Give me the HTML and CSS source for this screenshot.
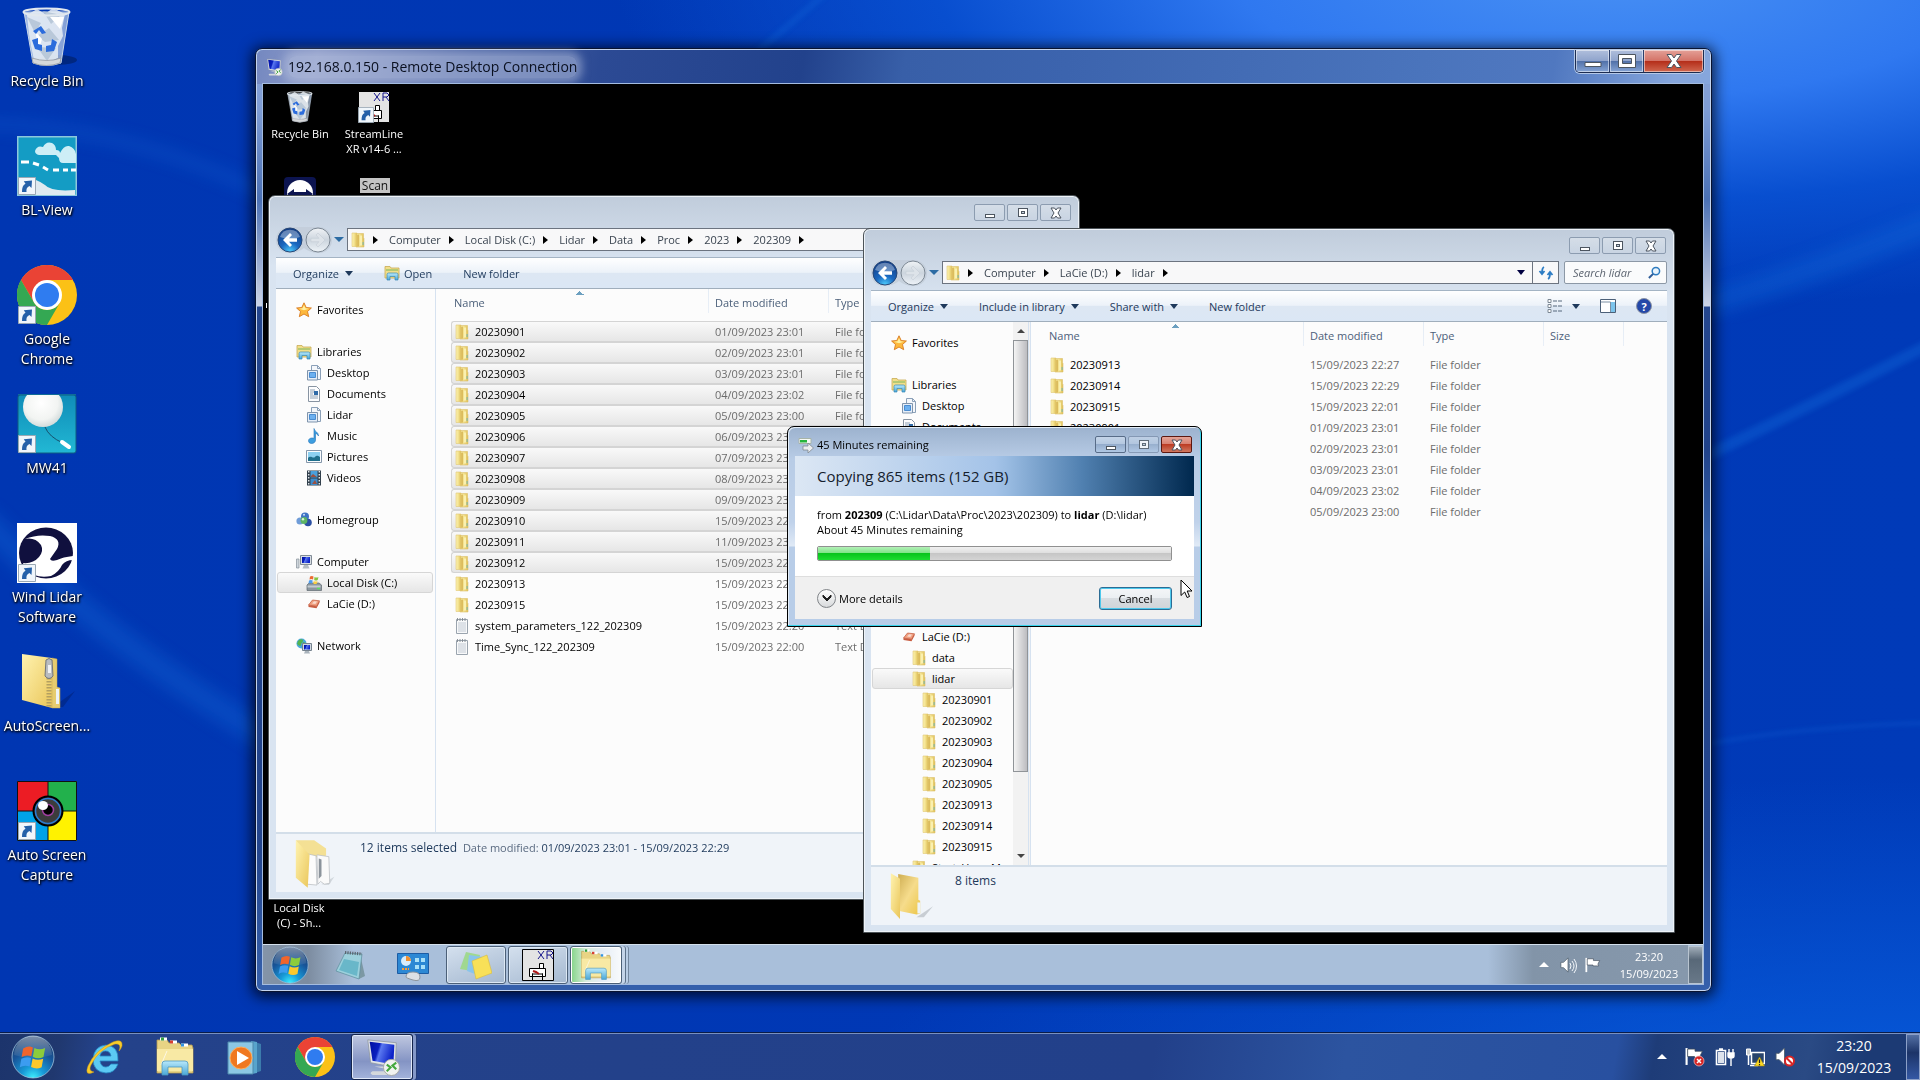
FILE: index.html
```html
<!DOCTYPE html>
<html lang="en">
<head>
<meta charset="utf-8">
<title>Desktop</title>
<link rel="stylesheet" href="styles.css">
</head>
<body>
<svg class="defs" aria-hidden="true">
  <defs>
    <linearGradient id="gFold" x1="0" x2="1"><stop offset="0" stop-color="#fdf4b4"/><stop offset=".5" stop-color="#f2e08c"/><stop offset="1" stop-color="#dfbf58"/></linearGradient>
    <linearGradient id="gBig" x1="0" x2="1" y2="1"><stop offset="0" stop-color="#fff3b0"/><stop offset="1" stop-color="#eac65a"/></linearGradient>
    <linearGradient id="gBig2" x1="0" x2="1" y2="1"><stop offset="0" stop-color="#cfae52"/><stop offset=".5" stop-color="#f6dc8c"/><stop offset="1" stop-color="#ecc648"/></linearGradient>
    <radialGradient id="gOrb" cx=".5" cy="1" r=".9"><stop offset="0" stop-color="#3ff0ff"/><stop offset=".3" stop-color="#189bd8"/><stop offset=".7" stop-color="#17559a"/><stop offset="1" stop-color="#1c3f70"/></radialGradient>
    <linearGradient id="gGloss" x1="0" x2="0" y2="1"><stop offset="0" stop-color="#fff" stop-opacity=".85"/><stop offset="1" stop-color="#fff" stop-opacity=".1"/></linearGradient>
    <radialGradient id="gBack" cx=".5" cy="1" r="1"><stop offset="0" stop-color="#4fd0ff"/><stop offset=".4" stop-color="#1a68c0"/><stop offset="1" stop-color="#123a80"/></radialGradient>
    <linearGradient id="gFwd" x1="0" x2="0" y2="1"><stop offset="0" stop-color="#f0f3f6"/><stop offset=".5" stop-color="#ccd5de"/><stop offset="1" stop-color="#eef3f8"/></linearGradient>
    <linearGradient id="gScr" x1="0" x2="1" y2=".3"><stop offset="0" stop-color="#0010a0"/><stop offset=".4" stop-color="#0a20c0"/><stop offset=".5" stop-color="#5a78f0"/><stop offset="1" stop-color="#0c22c8"/></linearGradient>
    <linearGradient id="gTeal" x1="0" x2="0" y2="1"><stop offset="0" stop-color="#0f8cb8"/><stop offset="1" stop-color="#22b8d4"/></linearGradient>
    <radialGradient id="gBall" cx=".45" cy=".4" r=".6"><stop offset="0" stop-color="#fff"/><stop offset=".7" stop-color="#f2f4f2"/><stop offset="1" stop-color="#d4dcdc"/></radialGradient>
    <linearGradient id="gBin" x1="0" x2="1"><stop offset="0" stop-color="#d4e4f4" stop-opacity=".75"/><stop offset=".5" stop-color="#f4f8fc" stop-opacity=".6"/><stop offset="1" stop-color="#a8c0e0" stop-opacity=".75"/></linearGradient>
    <linearGradient id="gLib" x1="0" x2="0" y2="1"><stop offset="0" stop-color="#b8e8fa"/><stop offset="1" stop-color="#4aa8d8"/></linearGradient>
    <filter id="soft" x="-20%" y="-20%" width="140%" height="140%"><feGaussianBlur stdDeviation="9"/></filter>
    <filter id="soft2" x="-20%" y="-20%" width="140%" height="140%"><feGaussianBlur stdDeviation="3"/></filter>
  </defs>

  <symbol id="folder" viewBox="0 0 14 16">
    <path d="M5 1.500h7.500V6l.5.500V15H5z" fill="url(#gFold)" stroke="#dcc06a" stroke-width=".6"/>
    <path d="M5 3l3-.5v12L5 15z" fill="#dcbc5c"/>
    <path d="M1 1h5v13.500H1z" fill="url(#gFold)" stroke="#e0c874" stroke-width=".6"/>
    <path d="M9 3.500h2v10H9z" fill="#faf0b0"/>
    <path d="M11.600 10h1v3h-1z" fill="#74b8b0"/>
  </symbol>
  <symbol id="textfile" viewBox="0 0 14 16">
    <path d="M1.500 1.500h11v14h-11z" fill="#f8f9fa" stroke="#9aa4ae"/>
    <path d="M3 5h8M3 7h8M3 9h8M3 11h8M3 13h8" stroke="#b4bfca" stroke-width=".8"/>
    <path d="M2.500 0v3M5 0v3M7.500 0v3M10 0v3" stroke="#808890" stroke-width=".9"/>
  </symbol>
  <symbol id="star" viewBox="0 0 16 16">
    <path d="M8 .8l2.200 4.700 5.200.5-3.900 3.500 1.200 5.200L8 12l-4.700 2.700 1.200-5.200L.6 6l5.200-.5z" fill="#fdb83c" stroke="#d87a20" stroke-width=".9"/>
    <path d="M8 3l1.500 3.300 3.500.4-5 1.500-5-1.500 3.500-.4z" fill="#fff0a0"/>
  </symbol>
  <symbol id="library" viewBox="0 0 16 16">
    <path d="M1 1.500h5l1 1.500h8v10H1z" fill="#f2df8a" stroke="#c8ab54" stroke-width=".8"/>
    <path d="M2 5h12" stroke="#79b45c"/>
    <path d="M3 15v-5.500q0-1.500 1.500-1.500h8q1.500 0 1.500 1.500V15h-3v-3.500H6V15z" fill="url(#gLib)" stroke="#3787b4" stroke-width=".7"/>
  </symbol>
  <symbol id="libdoc" viewBox="0 0 16 16">
    <path d="M5.500.5h6l3 3v11h-9z" fill="#f4f7fb" stroke="#8ba0b8"/>
    <path d="M11.500.5v3h3" fill="none" stroke="#8ba0b8"/>
    <path d="M1.500 5.500h10v9.500h-10z" fill="#e6eef8" stroke="#7f94ac"/>
    <path d="M3.500 7.500h6v5h-6z" fill="#6cb0f0" stroke="#4a8cd0"/>
  </symbol>
  <symbol id="docs" viewBox="0 0 16 16">
    <path d="M2.500.5h8l3 3v12h-11z" fill="#fdfdfe" stroke="#8894a2"/>
    <path d="M4 4h5M4 6h4M4 8h3M4 10h8M4 12h8" stroke="#8ea0b4"/>
    <path d="M8 5h4v4H8z" fill="#2f6aa8"/>
  </symbol>
  <symbol id="music" viewBox="0 0 16 16">
    <path d="M8 .5c.4 3 4.600 3.500 4.500 7.500-.8-1.700-2-2.400-3-2.600V12c0 2-1.700 3.500-3.900 3.500S2.500 14.300 2.500 12.700 4.200 9.800 6.500 10c.5 0 .9.200 1.500.4z" fill="#3c9ee0" stroke="#2272b8" stroke-width=".6"/>
  </symbol>
  <symbol id="pics" viewBox="0 0 16 16">
    <path d="M.5 1.500h15v12H.5z" fill="#fafcfe" stroke="#8496aa"/>
    <path d="M2 3h12v9H2z" fill="#8cd0f0"/><path d="M2 9c3-3 5 1 7-1s3-1 5 0v4H2z" fill="#1f6f8c"/>
  </symbol>
  <symbol id="video" viewBox="0 0 16 16">
    <path d="M1 .5h14v15H1z" fill="#32404c"/>
    <path d="M4.500 1h7v6.500h-7z" fill="#4aa0dc"/><path d="M4.500 8.500h7V15h-7z" fill="#3d8ccc"/>
    <path d="M5 6l2-2 4 3H5zM6 14l3-4 2 4z" fill="#9c5040"/>
    <path d="M2.700 1v14M13.300 1v14" stroke="#dfe6ec" stroke-width="1.400" stroke-dasharray="1.500 1.500"/>
  </symbol>
  <symbol id="homegroup" viewBox="0 0 16 16">
    <circle cx="9" cy="4.500" r="4" fill="#3f74c4"/><circle cx="4" cy="9" r="3.600" fill="#6f9cd8"/><circle cx="12" cy="10.500" r="3.800" fill="#2c50a4"/>
    <circle cx="8" cy="8.500" r="3.400" fill="#5cb464"/><circle cx="7" cy="7.300" r="1.200" fill="#d8f4d8"/><circle cx="8" cy="2.800" r="1" fill="#cfe0fa"/>
  </symbol>
  <symbol id="computer" viewBox="0 0 16 16">
    <path d="M.5 5h2.500v9H.5z" fill="#cfd6dc" stroke="#858f99" stroke-width=".7"/>
    <path d="M4.500 1.500h11v9h-11z" fill="#d8dee4" stroke="#818b96"/>
    <path d="M6 3h8v6H6z" fill="url(#gScr)"/><path d="M8 11h4l1.500 3.500h-7z" fill="#b4bcc4"/>
  </symbol>
  <symbol id="drive" viewBox="0 0 16 16">
    <path d="M1 10l2-2h10l2.500 2v5.500H1z" fill="#8c979f" stroke="#5e6870" stroke-width=".7"/>
    <path d="M1.500 10.500h13v2h-13z" fill="#c4ccd2"/><path d="M11 13.500h3" stroke="#58e060" stroke-width="1.500"/>
    <path d="M4 1.500q2-1 3.500 0L7 4.500q-1.500-1-3.500 0z" fill="#ec6a30"/><path d="M8.500 2q2 1 4 0l-.8 3q-1.800 1-3.500 0z" fill="#84c440"/>
    <path d="M3 5.500q2-1 3.700 0l-.6 3q-1.500-1-3.600 0z" fill="#4c9cf0"/><path d="M7.800 6q1.800 1 3.700 0l-.6 2.600q-1.800 1-3.600 0z" fill="#fcd040"/>
  </symbol>
  <symbol id="lacie" viewBox="0 0 16 16">
    <path d="M2.500 9l4-5 7 .8-3 5.400z" fill="#f0a080" stroke="#c0583c" stroke-width=".7"/>
    <path d="M2.500 9l8 1.200 3-5.400v2l-3 5.400-8-1.300z" fill="#c85c40"/><path d="M6 7.500l2-2.300 3 .4-1.600 2.500z" fill="#f8d8cc"/>
  </symbol>
  <symbol id="network" viewBox="0 0 16 16">
    <circle cx="5.500" cy="5.500" r="5" fill="#48a8dc"/><path d="M2 3c2-2 4-2 5-1S5 5 5 7 2 7 1 6zM7 4l3 1-1 4-3-1z" fill="#54b450"/>
    <path d="M6.500 5.500h9v7h-9z" fill="#d0d8e0" stroke="#76828e"/><path d="M8 7h6v4.500H8z" fill="url(#gScr)"/><path d="M9 13h4l1 2.500H8z" fill="#a9b3bc"/>
  </symbol>
  <symbol id="shortcut" viewBox="0 0 18 18">
    <path d="M.5.5h17v17H.5z" fill="#f0f6fb" stroke="#9aa8b4"/>
    <path d="M4 15c0-4.500.8-7 3.500-8.300L5.800 4.200 14 3.500 13.500 11l-2-2C9 10.300 8 12 8.500 15z" fill="#2460a8"/>
  </symbol>
  <symbol id="bin" viewBox="0 0 60 60">
    <ellipse cx="40" cy="53" rx="20" ry="5" fill="#000" opacity=".28"/>
    <path d="M7 5l9 51q14 5 28 0l8-51z" fill="url(#gBin)" stroke="#c9d8e8"/>
    <path d="M10 8l10-6 8 5 8-6 12 6-3 14 1 8-5 10 0 12-12 5-12-3-3-14-2-12z" fill="#e8eef4" opacity=".85"/>
    <path d="M10 10l14 6-6 10zM26 4l8 13 10-9zM20 29l12-8 10 12-14 2zM20 40l10 14 9-13z" fill="#aebfd2" opacity=".75"/>
    <path d="M33 10l10 12 4-12zM18 24l7 8-3 10z" fill="#fff"/>
    <path d="M16 24l8-5 5 7-4 1-3-4-3 4zM15 33l6-2v6l4 1 0 6-7-2zM29 45l0-6 5-1 1-6 5 3-3 9z" fill="#2c6cdc"/>
    <ellipse cx="29.500" cy="5" rx="23" ry="3.500" fill="none" stroke="#e2e8ee" stroke-width="2"/>
    <path d="M15 51q15 5 29 0l-1 5q-14 5-27 0z" fill="#d6d8da" stroke="#8c9098" stroke-width=".7"/>
  </symbol>
  <symbol id="blview" viewBox="0 0 60 60">
    <path d="M0 0h60v60H0z" fill="#149cc4"/>
    <path d="M0 0h60v60H0z" fill="none" stroke="#8cc8dc" stroke-width="3"/>
    <path d="M18 15q2-6 8-4 3-6 9-4 4 2 4 7 4 0 4 3 4-8 9-7 6 2 7 8v9H46q-4 0-4-5l-3-3H22q-4-1-4-4z" fill="#cdeef6"/>
    <path d="M4 26h8M16 27l6 2M26 31l5 3M36 34h6M46 34h5M54 34h5" stroke="#fff" stroke-width="3"/>
    <path d="M2 42q14-2 26 7 6 7 30 5v5H2z" fill="#dfeaf0"/>
  </symbol>
  <symbol id="chrome" viewBox="0 0 60 60">
    <circle cx="30" cy="30" r="30" fill="#fbc116"/>
    <path d="M30 0A30 30 0 0 1 56 15H30L17 37.500 4 15A30 30 0 0 1 30 0z" fill="#ea4335"/>
    <path d="M4 15A30 30 0 0 0 30 60L43 37.500A15 15 0 0 1 17 37.500z" fill="#34a853"/>
    <circle cx="30" cy="30" r="15" fill="#fff"/><circle cx="30" cy="30" r="12" fill="#2f7cf0"/>
  </symbol>
  <symbol id="mw41" viewBox="0 0 60 60">
    <rect x="1" y="1" width="58" height="58" rx="2" fill="url(#gTeal)" stroke="#0e5c80"/>
    <circle cx="26" cy="13" r="20" fill="url(#gBall)"/>
    <path d="M1 0h58v1H1z" fill="#0e6c98"/><path d="M28 33q4 10 18 16" fill="none" stroke="#17506c"/><path d="M45 48l7 5" stroke="#fff" stroke-width="4" stroke-linecap="round"/>
  </symbol>
  <symbol id="wind" viewBox="0 0 60 60">
    <path d="M0 0h60v60H0z" fill="#fff"/>
    <ellipse cx="29" cy="30" rx="27" ry="25.500" fill="#10103e"/>
    <path d="M8 16q12-5 25-3 12 3 7 13l-7 10q1 3 7 1 6-3 16-4v4q-7 0-11 5-3 7-11 11-9 2-17-1-9-4-11-12 10 1 16-6 5-6 2-12-6-8-16-6z" fill="#fff"/>
  </symbol>
  <symbol id="zip" viewBox="0 0 60 60">
    <path d="M36 55l22-16-12 16z" fill="#001a60" opacity=".4"/>
    <path d="M5 2l30 4v50L5 48z" fill="url(#gBig)"/><path d="M35 6l5 1v28l3 1v20l-8 0z" fill="#e6cc70" stroke="#c8a848" stroke-width=".5"/>
    <path d="M39 37h3v15h-3z" fill="#eef4f8"/>
    <path d="M32 26v29" stroke="#b4a060" stroke-width="5" stroke-dasharray="1.500 1.500"/>
    <path d="M29 8q3-3 6 0l1 16q-4 5-8 0z" fill="#b8bcc0" stroke="#72767a"/><path d="M31 13h3v8h-3z" fill="#f0f2f4"/>
  </symbol>
  <symbol id="asc" viewBox="0 0 60 60">
    <path d="M0 0h31v30H0z" fill="#ec1c24"/><path d="M31 0h29v30H31z" fill="#22b14c"/><path d="M0 30h31v30H0z" fill="#00a2e8"/><path d="M31 30h29v30H31z" fill="#fff200"/>
    <path d="M31 0v60M0 30h60M.5.5h59v59H.5z" fill="none" stroke="#111"/>
    <circle cx="31" cy="30" r="14.500" fill="#3c3c3c" stroke="#000" stroke-width="2"/><circle cx="31" cy="30" r="12.500" fill="none" stroke="#2c7cd0" stroke-width="1.500"/>
    <circle cx="31" cy="29" r="5.500" fill="#000" stroke="#a040a0" stroke-width="1.500"/><ellipse cx="26" cy="24.500" rx="5" ry="4.500" fill="#fff"/>
  </symbol>
  <symbol id="winflag" viewBox="0 0 24 24">
    <path d="M4 5q4-2.500 7.500-.8L10.300 11q-4-1.500-7.500.7z" fill="#f0652c"/><path d="M12.700 4.700q4 2 8.300 0l-1.300 7q-4.200 2-8.200-.3z" fill="#8ccc3c"/>
    <path d="M2.600 13q3.600-2 7.500-.7L9 19q-4-1.500-7.600.6z" fill="#3c9cf0"/><path d="M11.300 12.700q4 2 8.200.2l-1.200 6.700q-4 2-8.200-.2z" fill="#fcc82c"/>
  </symbol>
  <symbol id="orb" viewBox="0 0 44 44">
    <circle cx="22" cy="22" r="21" fill="url(#gOrb)" stroke="#9cc0dc" stroke-opacity=".8"/>
    <path d="M3 20a19 19 0 0 1 38 0q-19 6-38 0z" fill="url(#gGloss)" opacity=".5"/>
    <use href="#winflag" x="7" y="7" width="31" height="31"/>
  </symbol>
  <symbol id="ie" viewBox="0 0 40 40">
    <path d="M33 24H15q1 6 6 6 3 0 5-3h7q-3 9-12 9Q8 35 8 22 9 9 21 8q13 1 12 16zM15 19h11q-1-5-5.500-5T15 19z" fill="#5ccaf4" stroke="#2484c0" stroke-width=".8"/>
    <path d="M9 35Q-1 40 3 29 10 13 28 5q10-4 9 4-1 3-3 5 3-8-4-7Q14 12 6 28q-3 6 3 7z" fill="#f8cc2c" stroke="#d09a14" stroke-width=".5"/>
  </symbol>
  <symbol id="explorer" viewBox="0 0 40 40">
    <path d="M2 8V3h10l2 3h10l2 2h11l1 3v25H2z" fill="#e8d484" stroke="#b89c50" stroke-width=".8"/>
    <path d="M5 2h7M15 5h7M26 8h7" stroke="#fff" stroke-width="3"/><path d="M6 2h3" stroke="#34a040" stroke-width="3"/><path d="M15 5h3" stroke="#d84030" stroke-width="3"/><path d="M26 8h3" stroke="#3494e0" stroke-width="3"/>
    <path d="M2 12h36v22H2z" fill="#f8e9a4"/><path d="M12 14l-6 14" stroke="#fff" opacity=".7"/>
    <path d="M7 38V27q0-3 3-3h20q3 0 3 3v11h-6v-8H13v8z" fill="url(#gLib)" stroke="#4c98c0" stroke-width=".8"/>
  </symbol>
  <symbol id="wmp" viewBox="0 0 40 40">
    <path d="M30 5l6 2v27l-6 2z" fill="#3c7cac"/><path d="M26 4l6 1v31l-6 1z" fill="#58a4cc"/>
    <path d="M3 5h25v32H3z" fill="#8cc8e4" stroke="#4c88ac"/>
    <circle cx="16" cy="21" r="11" fill="#f07820" stroke="#fcb060"/><path d="M12 14l12 7-12 7z" fill="#fff"/>
  </symbol>
  <symbol id="rdp" viewBox="0 0 40 40">
    <path d="M12 30h10v5H10q-4 2 0 4h16v-6z" fill="#d4d8dc"/>
    <path d="M5 2l30 3-1 26-26-5z" fill="#dfe3e8" stroke="#8c949c" stroke-width=".8"/>
    <path d="M7 4l26 3-1 21-22-4z" fill="url(#gScr)"/>
    <circle cx="30" cy="31" r="8.500" fill="#f0f2f0" stroke="#a4a8a4"/><path d="M25 28l4 3-4 4M35 26l-4 3 4 4" fill="none" stroke="#44a83c" stroke-width="2.200"/>
  </symbol>
  <symbol id="notepad" viewBox="0 0 32 32">
    <path d="M25 5l5 22-6 3z" fill="#7c98a4"/><path d="M10 4l17 1-3 25L1 22z" fill="#9cd0dc" stroke="#5c8c9c" stroke-width=".7"/>
    <path d="M9 10l15 3-2 14L4 21z" fill="#5cb0c4" opacity=".8"/><path d="M10 3.500l17 1.500" stroke="#5a646c" stroke-width="3" stroke-dasharray="1.200 1.200"/>
  </symbol>
  <symbol id="cpanel" viewBox="0 0 32 32">
    <path d="M.5 4.500h31v20H.5z" fill="#2c88d4" stroke="#1c5ca4"/><circle cx="9" cy="12" r="5" fill="#d8ecfa"/><path d="M9 12V7a5 5 0 0 1 5 5z" fill="#f09030"/>
    <path d="M18 9h4v4h-4zM24 9h4v4h-4zM18 16h4v4h-4zM24 16h4v4h-4z" fill="#a8e0f8"/><path d="M5 20h7" stroke="#fc9c34" stroke-width="2" stroke-dasharray="2 1"/>
    <path d="M9 28q0-5 7-5t7 5-7 3-7-3z" fill="#dce0e4" stroke="#8c949c"/>
  </symbol>
  <symbol id="sticky" viewBox="0 0 32 32">
    <path d="M6 3l14 3-3 17-17-3z" fill="#a0d890"/><path d="M9 6l14 2-3 19-13-5z" fill="#88c4ec"/><path d="M12 12l15-6 5 18-16 6z" fill="#f8e058" stroke="#d8bc3c" stroke-width=".6"/>
  </symbol>
  <symbol id="xr" viewBox="0 0 32 32">
    <path d="M.5.5h31v31H.5z" fill="#e4e4e4" stroke="#000"/>
    <path d="M16 2l6 8M22 2l-6 8M25 10V2h4l2 2-2 2h-4M28 6l3 4" fill="none" stroke="#14148c"/>
    <path d="M7.500 19.500h16v8h-16zM17.500 14.500h4v5h-4zM10.500 24.500v7M20.500 24.500v7M10 25h11" fill="#fff" stroke="#000"/><path d="M11 22l3 1 3 2" stroke="#b01818" stroke-width="2"/>
  </symbol>
  <symbol id="teamv" viewBox="0 0 32 32">
    <rect width="32" height="32" rx="4" fill="#0c1450"/><circle cx="16" cy="16" r="13" fill="#fff"/><path d="M3 17l7-5v3h12v-3l7 5-7 5v-3H10v3z" fill="#0c1450"/>
  </symbol>
  <symbol id="speaker" viewBox="0 0 18 18">
    <path d="M1 6h3l5-5v16l-5-5H1z" fill="#fff" stroke="#4c5a68" stroke-width=".8"/>
  </symbol>
  <symbol id="flag" viewBox="0 0 18 18">
    <path d="M1.500 1v16" stroke="#fff" stroke-width="2"/><path d="M2.500 2h7v2h7l-2 4 1 2H9V9H2.500z" fill="#fff" stroke="#3a4654" stroke-width=".7"/>
  </symbol>
  <symbol id="min" viewBox="0 0 12 12"><path d="M1 7h10v4H1z" fill="#4c5560"/><path d="M2 8h8v2H2z" fill="#fff"/></symbol>
  <symbol id="max" viewBox="0 0 12 12"><path d="M1 1h10v9H1z" fill="#4c5560"/><path d="M2 2h8v7H2z" fill="#fff"/><path d="M4 4h4v3H4z" fill="#4c5560"/><path d="M5 5h2v1H5z" fill="#c8d4e0"/></symbol>
  <symbol id="close" viewBox="0 0 12 12"><path d="M1 1h3.500L6 3l1.500-2H11L8 6l3 5H7.500L6 9l-1.500 2H1l3-5z" fill="#fff" stroke="#4c5560"/></symbol>
  <symbol id="navbtns" viewBox="0 0 56 28">
    <path d="M13 1h30a13 13 0 0 1 0 26q-9 0-15-5-6 5-15 5a13 13 0 0 1 0-26z" fill="#c2ccd8" opacity=".8"/>
    <circle cx="14" cy="14" r="12" fill="url(#gBack)" stroke="#284878"/><path d="M4 11a10.500 10.500 0 0 1 20 0q-10 4-20 0z" fill="#fff" opacity=".35"/>
    <path d="M7 14l7-7 2 2-3 3.300h8v3.400h-8l3 3.300-2 2z" fill="#fff"/>
    <circle cx="42" cy="14" r="12" fill="url(#gFwd)" stroke="#7c8894"/><path d="M49 14l-7-7-2 2 3 3.300h-8v3.400h8l-3 3.300 2 2z" fill="#dde3e9" stroke="#c0c9d2" stroke-width=".5"/>
  </symbol>
  <symbol id="bigfolder" viewBox="0 0 48 56">
    <path d="M30 50l18-12-10 12z" fill="#8c949c" opacity=".4"/>
    <path d="M10 3l22 4v24l2 1v14l-4 1-20-4z" fill="url(#gBig2)"/><path d="M2 2l10 6v44L2 41z" fill="url(#gBig)"/><path d="M31 34h3v12h-3z" fill="#eef4f6"/>
  </symbol>
  <symbol id="bigdocs" viewBox="0 0 48 56">
    <path d="M30 50l14-8-6 9z" fill="#8c949c" opacity=".3"/>
    <path d="M2 2h20l13 9v8L14 22z" fill="#f4e094"/><path d="M15 17l9 2 1 32-11-1z" fill="#fcfcfc" stroke="#b8bcc0" stroke-width=".8"/>
    <path d="M25 18l13 2 1 29-6 1-4-3-3 3z" fill="#fafafa" stroke="#b8bcc0" stroke-width=".8"/><path d="M27 22l3 1v18l-3 3z" fill="#8c949c"/><path d="M2 2l15 16-2 36L2 43z" fill="url(#gBig)"/>
  </symbol>
</svg>

<main class="desktop">
  <svg class="wallpaper" viewBox="0 0 1920 1080" preserveAspectRatio="none" aria-hidden="true">
    <g fill="none" stroke="#1478e4" opacity=".3">
      <path d="M-20 540Q100 670 280 780T700 1000" stroke-width="26" filter="url(#soft)"/>
      <path d="M1700 480Q1800 430 1940 355" stroke-width="12" filter="url(#soft2)"/>
      <path d="M1700 320Q1800 290 1940 230" stroke-width="26" filter="url(#soft)"/>
      <path d="M1700 780Q1800 760 1940 756" stroke-width="3" filter="url(#soft2)"/>
      <path d="M-20 130Q120 130 270 205" stroke-width="10" filter="url(#soft)"/>
      <path d="M840-20L740 70" stroke-width="5" filter="url(#soft2)"/>
    </g>
  </svg>

  <ul class="shortcuts">
    <li><a href="#"><svg class="ico60"><use href="#bin"/></svg><span>Recycle Bin</span></a></li>
    <li><a href="#"><svg class="ico60"><use href="#blview"/><use href="#shortcut" x="1" y="41" width="18" height="18"/></svg><span>BL-View</span></a></li>
    <li><a href="#"><svg class="ico60"><use href="#chrome"/><use href="#shortcut" x="1" y="41" width="18" height="18"/></svg><span>Google Chrome</span></a></li>
    <li><a href="#"><svg class="ico60"><use href="#mw41"/><use href="#shortcut" x="1" y="41" width="18" height="18"/></svg><span>MW41</span></a></li>
    <li><a href="#"><svg class="ico60"><use href="#wind"/><use href="#shortcut" x="1" y="41" width="18" height="18"/></svg><span>Wind Lidar Software</span></a></li>
    <li><a href="#"><svg class="ico60"><use href="#zip"/></svg><span>AutoScreen...</span></a></li>
    <li><a href="#"><svg class="ico60"><use href="#asc"/><use href="#shortcut" x="1" y="41" width="18" height="18"/></svg><span>Auto Screen Capture</span></a></li>
  </ul>

  <section class="rdp">
    <header class="rdp-title">
      <svg class="rdp-icon"><use href="#rdp"/></svg>
      <h1>192.168.0.150 - Remote Desktop Connection</h1>
      <div class="rdp-controls">
        <button type="button" aria-label="Minimize"><svg viewBox="0 0 18 14"><path d="M1 8.500h16v4H1z" fill="#fff" stroke="#4c5560"/></svg></button>
        <button type="button" aria-label="Maximize"><svg viewBox="0 0 18 14"><path fill-rule="evenodd" d="M.500.500h17v13H.500zM4.500 4.500h9v5h-9z" fill="#fff" stroke="#4c5560"/></svg></button>
        <button type="button" class="rdp-close" aria-label="Close"><svg viewBox="0 0 18 14"><path d="M2 .500h4.500L9 4 11.500.500H16L11.500 7l4.500 6.500h-4.500L9 10l-2.500 3.500H2L6.500 7z" fill="#fff" stroke="#4c5560"/></svg></button>
      </div>
    </header>

    <div class="remote">
      <div class="remote-area">
        <a class="rshort r-bin" href="#"><svg><use href="#bin"/></svg><span>Recycle Bin</span></a>
        <a class="rshort r-xr" href="#"><svg><use href="#xr"/><use href="#shortcut" x="0" y="16" width="16" height="16"/></svg><span>StreamLine XR v14-6 ...</span></a>
        <a class="rshort r-team" href="#" aria-label="TeamViewer"><svg><use href="#teamv"/></svg></a>
        <a class="rshort r-scan" href="#"><b>Scan</b></a>
        <a class="rshort r-disk" href="#"><span>Local Disk (C) - Sh...</span></a>
        <i class="tick"></i>

        <section class="explorer ex-left">
          <div class="caption">
            <button type="button" aria-label="Minimize"><svg><use href="#min"/></svg></button>
            <button type="button" aria-label="Maximize"><svg><use href="#max"/></svg></button>
            <button type="button" aria-label="Close"><svg><use href="#close"/></svg></button>
          </div>
          <div class="addressrow">
            <svg class="navbtns"><use href="#navbtns"/></svg><i class="hist"></i>
            <nav class="address"><svg class="fold"><use href="#folder"/></svg><i></i><a href="#">Computer</a><i></i><a href="#">Local Disk (C:)</a><i></i><a href="#">Lidar</a><i></i><a href="#">Data</a><i></i><a href="#">Proc</a><i></i><a href="#">2023</a><i></i><a href="#">202309</a><i></i></nav>
          </div>
          <div class="frame">
            <div class="toolbar">
              <button type="button">Organize <i></i></button>
              <button type="button" class="open"><svg><use href="#library"/></svg>Open</button>
              <button type="button">New folder</button>
            </div>
            <div class="panes">
              <ul class="tree">
                <li><a href="#"><svg><use href="#star"/></svg>Favorites</a></li>
                <li class="gap"><a href="#"><svg><use href="#library"/></svg>Libraries</a></li>
                <li class="l1"><a href="#"><svg><use href="#libdoc"/></svg>Desktop</a></li>
                <li class="l1"><a href="#"><svg><use href="#docs"/></svg>Documents</a></li>
                <li class="l1"><a href="#"><svg><use href="#libdoc"/></svg>Lidar</a></li>
                <li class="l1"><a href="#"><svg><use href="#music"/></svg>Music</a></li>
                <li class="l1"><a href="#"><svg><use href="#pics"/></svg>Pictures</a></li>
                <li class="l1"><a href="#"><svg><use href="#video"/></svg>Videos</a></li>
                <li class="gap"><a href="#"><svg><use href="#homegroup"/></svg>Homegroup</a></li>
                <li class="gap"><a href="#"><svg><use href="#computer"/></svg>Computer</a></li>
                <li class="l1 on"><a href="#"><svg><use href="#drive"/></svg>Local Disk (C:)</a></li>
                <li class="l1"><a href="#"><svg><use href="#lacie"/></svg>LaCie (D:)</a></li>
                <li class="gap"><a href="#"><svg><use href="#network"/></svg>Network</a></li>
              </ul>
              <div class="files">
                <table>
                  <colgroup><col class="c-name"><col class="c-date"><col class="c-type"><col class="c-size"><col></colgroup>
                  <thead><tr><th class="sorted">Name</th><th>Date modified</th><th>Type</th><th>Size</th><th></th></tr></thead>
                  <tbody>
                    <tr class="sel"><td><svg><use href="#folder"/></svg>20230901</td><td>01/09/2023 23:01</td><td>File folder</td><td></td><td></td></tr>
                    <tr class="sel"><td><svg><use href="#folder"/></svg>20230902</td><td>02/09/2023 23:01</td><td>File folder</td><td></td><td></td></tr>
                    <tr class="sel"><td><svg><use href="#folder"/></svg>20230903</td><td>03/09/2023 23:01</td><td>File folder</td><td></td><td></td></tr>
                    <tr class="sel"><td><svg><use href="#folder"/></svg>20230904</td><td>04/09/2023 23:02</td><td>File folder</td><td></td><td></td></tr>
                    <tr class="sel"><td><svg><use href="#folder"/></svg>20230905</td><td>05/09/2023 23:00</td><td>File folder</td><td></td><td></td></tr>
                    <tr class="sel"><td><svg><use href="#folder"/></svg>20230906</td><td>06/09/2023 23:01</td><td>File folder</td><td></td><td></td></tr>
                    <tr class="sel"><td><svg><use href="#folder"/></svg>20230907</td><td>07/09/2023 23:01</td><td>File folder</td><td></td><td></td></tr>
                    <tr class="sel"><td><svg><use href="#folder"/></svg>20230908</td><td>08/09/2023 23:01</td><td>File folder</td><td></td><td></td></tr>
                    <tr class="sel"><td><svg><use href="#folder"/></svg>20230909</td><td>09/09/2023 23:01</td><td>File folder</td><td></td><td></td></tr>
                    <tr class="sel"><td><svg><use href="#folder"/></svg>20230910</td><td>15/09/2023 22:29</td><td>File folder</td><td></td><td></td></tr>
                    <tr class="sel"><td><svg><use href="#folder"/></svg>20230911</td><td>11/09/2023 23:01</td><td>File folder</td><td></td><td></td></tr>
                    <tr class="sel"><td><svg><use href="#folder"/></svg>20230912</td><td>15/09/2023 22:29</td><td>File folder</td><td></td><td></td></tr>
                    <tr><td><svg><use href="#folder"/></svg>20230913</td><td>15/09/2023 22:27</td><td>File folder</td><td></td><td></td></tr>
                    <tr><td><svg><use href="#folder"/></svg>20230915</td><td>15/09/2023 22:01</td><td>File folder</td><td></td><td></td></tr>
                    <tr><td><svg><use href="#textfile"/></svg>system_parameters_122_202309</td><td>15/09/2023 22:20</td><td>Text Document</td><td></td><td></td></tr>
                    <tr><td><svg><use href="#textfile"/></svg>Time_Sync_122_202309</td><td>15/09/2023 22:00</td><td>Text Document</td><td></td><td></td></tr>
                  </tbody>
                </table>
              </div>
            </div>
            <footer class="details"><svg><use href="#bigdocs"/></svg><p><strong>12 items selected</strong>  <span>Date modified:</span> 01/09/2023 23:01 - 15/09/2023 22:29</p></footer>
          </div>
        </section>

        <section class="explorer ex-right">
          <div class="caption">
            <button type="button" aria-label="Minimize"><svg><use href="#min"/></svg></button>
            <button type="button" aria-label="Maximize"><svg><use href="#max"/></svg></button>
            <button type="button" aria-label="Close"><svg><use href="#close"/></svg></button>
          </div>
          <div class="addressrow">
            <svg class="navbtns"><use href="#navbtns"/></svg><i class="hist"></i>
            <nav class="address"><svg class="fold"><use href="#folder"/></svg><i></i><a href="#">Computer</a><i></i><a href="#">LaCie (D:)</a><i></i><a href="#">lidar</a><i></i><b></b>
              <button type="button" class="refresh" aria-label="Refresh"><svg viewBox="0 0 16 16"><path d="M6 2Q4 3 4 8M1.500 6L4 9l2.500-3M10 14q2-1 2-6M9.500 10L12 7l2.500 3" fill="none" stroke="#2c7cc4" stroke-width="1.800"/></svg></button></nav>
            <label class="search"><input type="text" placeholder="Search lidar" aria-label="Search lidar"><svg viewBox="0 0 14 14"><circle cx="8.500" cy="5.500" r="4" fill="#eaf4fc" stroke="#2e7cc0" stroke-width="1.600"/><path d="M5.500 8.500L1 13" stroke="#2e5c98" stroke-width="2.200"/></svg></label>
          </div>
          <div class="frame">
            <div class="toolbar">
              <button type="button">Organize <i></i></button>
              <button type="button">Include in library <i></i></button>
              <button type="button">Share with <i></i></button>
              <button type="button">New folder</button>
              <span class="tools">
                <button type="button" aria-label="Views"><svg viewBox="0 0 16 16"><path d="M1 1.500h3v3H1zM1 6.500h3v3H1zM1 11.500h3v3H1z" fill="#fff" stroke="#7c8894"/><path d="M6 3h4M11 3h4M6 8h4M11 8h4M6 13h4M11 13h4" stroke="#56687c"/></svg><i></i></button>
                <button type="button" aria-label="Preview pane"><svg viewBox="0 0 16 16"><path d="M.5 1.500h15v13H.5z" fill="#fff" stroke="#4c6078"/><path d="M10 4h5v10h-5z" fill="#7cc4ec"/><path d="M1 4h9.500v10" fill="none" stroke="#7c90a4"/></svg></button>
                <button type="button" class="help" aria-label="Help">?</button>
              </span>
            </div>
            <div class="panes">
              <ul class="tree scrolled">
                <li><a href="#"><svg><use href="#star"/></svg>Favorites</a></li>
                <li class="gap"><a href="#"><svg><use href="#library"/></svg>Libraries</a></li>
                <li class="l1"><a href="#"><svg><use href="#libdoc"/></svg>Desktop</a></li>
                <li class="l1"><a href="#"><svg><use href="#docs"/></svg>Documents</a></li>
                <li class="l1"><a href="#"><svg><use href="#libdoc"/></svg>Lidar</a></li>
                <li class="l1"><a href="#"><svg><use href="#music"/></svg>Music</a></li>
                <li class="l1"><a href="#"><svg><use href="#pics"/></svg>Pictures</a></li>
                <li class="l1"><a href="#"><svg><use href="#video"/></svg>Videos</a></li>
                <li class="gap"><a href="#"><svg><use href="#homegroup"/></svg>Homegroup</a></li>
                <li class="gap"><a href="#"><svg><use href="#computer"/></svg>Computer</a></li>
                <li class="l1"><a href="#"><svg><use href="#drive"/></svg>Local Disk (C:)</a></li>
                <li class="l1"><a href="#"><svg><use href="#lacie"/></svg>LaCie (D:)</a></li>
                <li class="l2"><a href="#"><svg><use href="#folder"/></svg>data</a></li>
                <li class="l2 on"><a href="#"><svg><use href="#folder"/></svg>lidar</a></li>
                <li class="l3"><a href="#"><svg><use href="#folder"/></svg>20230901</a></li>
                <li class="l3"><a href="#"><svg><use href="#folder"/></svg>20230902</a></li>
                <li class="l3"><a href="#"><svg><use href="#folder"/></svg>20230903</a></li>
                <li class="l3"><a href="#"><svg><use href="#folder"/></svg>20230904</a></li>
                <li class="l3"><a href="#"><svg><use href="#folder"/></svg>20230905</a></li>
                <li class="l3"><a href="#"><svg><use href="#folder"/></svg>20230913</a></li>
                <li class="l3"><a href="#"><svg><use href="#folder"/></svg>20230914</a></li>
                <li class="l3"><a href="#"><svg><use href="#folder"/></svg>20230915</a></li>
                <li class="l2"><a href="#"><svg><use href="#folder"/></svg>Start_Here_Mac</a></li>
              </ul>
              <div class="scrollbar"><i class="up"></i><span></span><i class="down"></i></div>
              <div class="files">
                <table>
                  <colgroup><col class="c-name"><col class="c-date"><col class="c-type"><col class="c-size"><col></colgroup>
                  <thead><tr><th class="sorted">Name</th><th>Date modified</th><th>Type</th><th>Size</th><th></th></tr></thead>
                  <tbody>
                    <tr><td><svg><use href="#folder"/></svg>20230913</td><td>15/09/2023 22:27</td><td>File folder</td><td></td><td></td></tr>
                    <tr><td><svg><use href="#folder"/></svg>20230914</td><td>15/09/2023 22:29</td><td>File folder</td><td></td><td></td></tr>
                    <tr><td><svg><use href="#folder"/></svg>20230915</td><td>15/09/2023 22:01</td><td>File folder</td><td></td><td></td></tr>
                    <tr><td><svg><use href="#folder"/></svg>20230901</td><td>01/09/2023 23:01</td><td>File folder</td><td></td><td></td></tr>
                    <tr><td><svg><use href="#folder"/></svg>20230902</td><td>02/09/2023 23:01</td><td>File folder</td><td></td><td></td></tr>
                    <tr><td><svg><use href="#folder"/></svg>20230903</td><td>03/09/2023 23:01</td><td>File folder</td><td></td><td></td></tr>
                    <tr><td><svg><use href="#folder"/></svg>20230904</td><td>04/09/2023 23:02</td><td>File folder</td><td></td><td></td></tr>
                    <tr><td><svg><use href="#folder"/></svg>20230905</td><td>05/09/2023 23:00</td><td>File folder</td><td></td><td></td></tr>
                  </tbody>
                </table>
              </div>
            </div>
            <footer class="details"><svg><use href="#bigfolder"/></svg><p><strong>8 items</strong></p></footer>
          </div>
        </section>

        <section class="dialog" role="dialog" aria-labelledby="copytitle">
          <header class="dlg-title">
            <svg class="dlg-icon" viewBox="0 0 16 16"><path d="M1 1.500h12v5H1z" fill="#f4f8f4" stroke="#a8b4a8"/><path d="M2 3h7v2.500H2z" fill="#24b43c"/><path d="M5 9h5V6l5.500 5-5.500 5v-3H5z" fill="#eceef0" stroke="#80888f" stroke-width=".8"/></svg>
            <h2 id="copytitle">45 Minutes remaining</h2>
            <div class="caption">
              <button type="button" aria-label="Minimize"><svg><use href="#min"/></svg></button>
              <button type="button" disabled aria-label="Maximize"><svg><use href="#max"/></svg></button>
              <button type="button" class="red" aria-label="Close"><svg><use href="#close"/></svg></button>
            </div>
          </header>
          <p class="banner">Copying 865 items (152 GB)</p>
          <div class="dlg-body">
            <p>from <b>202309</b> (C:\Lidar\Data\Proc\2023\202309) to <b>lidar</b> (D:\lidar)<br>About 45 Minutes remaining</p>
            <progress max="355" value="113" aria-label="Copy progress"></progress>
          </div>
          <footer>
            <button type="button" class="more"><i><svg viewBox="0 0 10 8"><path d="M1 1l4 4 4-4v2L5 7 1 3z" fill="#222" stroke="#222"/></svg></i>More details</button>
            <button type="button" class="cancel">Cancel</button>
          </footer>
        </section>
        <svg class="cursor" viewBox="0 0 13 20"><path d="M1 1v15.500l3.700-3.500 2.400 5.500 2.400-1L7.200 12H12z" fill="#fff" stroke="#000"/></svg>
      </div>

      <footer class="rbar">
        <button type="button" class="rstart" aria-label="Start"><svg><use href="#orb"/></svg></button>
        <button type="button" class="pin" aria-label="Notepad"><svg><use href="#notepad"/></svg></button>
        <button type="button" class="pin" aria-label="Control Panel"><svg><use href="#cpanel"/></svg></button>
        <button type="button" class="task" aria-label="Sticky Notes"><svg><use href="#sticky"/></svg></button>
        <button type="button" class="task" aria-label="StreamLine XR"><svg><use href="#xr"/></svg></button>
        <button type="button" class="task busy" aria-label="Windows Explorer"><svg><use href="#explorer"/></svg></button>
        <div class="rtray">
          <i class="uparrow"></i>
          <svg><use href="#speaker"/><path d="M11 6q2 3 0 6M13 4q4 5 0 10M15 2q5 7 0 14" fill="none" stroke="#f4f8fc"/></svg>
          <svg><use href="#flag"/></svg>
          <time>23:20<br>15/09/2023</time>
        </div>
        <button type="button" class="rpeek" aria-label="Show desktop"></button>
      </footer>
    </div>
  </section>
</main>

<footer class="taskbar">
  <button type="button" class="start" aria-label="Start"><svg><use href="#orb"/></svg></button>
  <button type="button" class="tpin" aria-label="Internet Explorer"><svg><use href="#ie"/></svg></button>
  <button type="button" class="tpin" aria-label="Windows Explorer"><svg><use href="#explorer"/></svg></button>
  <button type="button" class="tpin" aria-label="Windows Media Player"><svg><use href="#wmp"/></svg></button>
  <button type="button" class="tpin" aria-label="Google Chrome"><svg><use href="#chrome"/></svg></button>
  <button type="button" class="ttask" aria-label="Remote Desktop Connection"><svg><use href="#rdp"/></svg></button>
  <div class="tray">
    <i class="uparrow"></i>
    <svg viewBox="0 0 20 20"><use href="#flag" width="19" height="19"/><circle cx="14" cy="14" r="5" fill="#d82424" stroke="#f4c4c4" stroke-width=".7"/><path d="M12 12l4 4M16 12l-4 4" stroke="#fff" stroke-width="1.500"/></svg>
    <svg viewBox="0 0 20 20"><path d="M1.500 3.500h9v14h-9zM4 2h4" fill="none" stroke="#fff" stroke-width="1.600"/><path d="M3 5h6v11H3z" fill="#fff" opacity=".85"/><path d="M14 2v4M18 2v4M13 6h6v3q0 2-3 2t-3-2zM16 11v8" fill="#fff" stroke="#fff" stroke-width="1.400"/></svg>
    <svg viewBox="0 0 20 20"><path d="M6.500 5.500h13v11h-13z" fill="#28446c" stroke="#fff" stroke-width="1.500"/><path d="M1.500 2h4v6h-4z" fill="#c8ccd0" stroke="#fff"/><path d="M3.500 8v10M5 18.500h8" stroke="#fff" stroke-width="1.500"/><path d="M14.500 10l5 9h-10z" fill="#fcd824" stroke="#a08410" stroke-width=".6"/><path d="M14.500 12.500v3.500M14.500 17v1.200" stroke="#222" stroke-width="1.200"/></svg>
    <svg viewBox="0 0 20 20"><use href="#speaker" width="19" height="19"/><circle cx="14.500" cy="14" r="4.500" fill="#fff" stroke="#d82424" stroke-width="2"/><path d="M11.500 11l6 6" stroke="#d82424" stroke-width="2"/></svg>
    <time>23:20<br>15/09/2023</time>
  </div>
  <button type="button" class="peek" aria-label="Show desktop"></button>
</footer>
</body>
</html>
```
FILE: styles.css
```css
* { box-sizing: border-box; }
body, h1, h2, p, ul { margin: 0; padding: 0; }
html { height: 100%; }
body {
  display: flex;
  flex-direction: column;
  min-height: 100vh;
  overflow: hidden;
  font-family: "Open Sans", "Noto Sans", sans-serif;
  font-size: 11px;
  line-height: 15px;
  color: #000;
}
button { font: inherit; color: inherit; border: 0; padding: 0; background: none; }
a { color: inherit; text-decoration: none; }
ul { list-style: none; }
h1, h2 { font-weight: 400; }
svg { display: block; flex: none; }
.defs { position: absolute; width: 0; height: 0; }

/* Desktop */
.desktop {
  position: relative;
  flex: 1;
  background:
    radial-gradient(ellipse 1000px 340px at 84% -30px, #4890f4 0%, #2f78f0 38%, rgba(10, 84, 214, .8) 68%, rgba(0, 56, 182, 0) 100%),
    radial-gradient(ellipse 1100px 380px at 100% 112%, #0860e0 0%, rgba(0, 56, 182, 0) 100%),
    linear-gradient(90deg, #0036b2, #003ab8);
}
.wallpaper { position: absolute; inset: 0; width: 100%; height: 100%; }
.shortcuts {
  position: absolute;
  left: 0;
  top: 7px;
  width: 94px;
  display: grid;
  grid-auto-rows: 129px;
}
.shortcuts a {
  display: flex;
  flex-direction: column;
  align-items: center;
  gap: 4px;
  text-align: center;
  font-size: 14px;
  line-height: 20px;
  color: #fff;
  text-shadow: 1px 1px 2px #000, 0 1px 3px #000;
}
.ico60 { width: 60px; height: 60px; }

/* Remote desktop window */
.rdp {
  position: absolute;
  left: 255px;
  top: 48px;
  right: 208px;
  bottom: 40px;
  display: flex;
  flex-direction: column;
  padding: 0 8px 7px 7px;
  border-radius: 7px;
  border: 1px solid #0a1430;
  box-shadow: inset 0 0 0 1px #c4d4ee, 0 2px 14px 3px rgba(0, 0, 10, .75);
  background: linear-gradient(180deg, #8ba4d6 0, #7e9cd4 60px, #4a70b4 150px, #b4c0da 235px, #ccd4e6 257px, #24468e 258px, #20428a 400px, #3460a8 490px, #20428a 580px, #24468e 800px, #3560ac 100%);
}
.rdp-title {
  display: flex;
  align-items: flex-start;
  height: 34px;
  margin: 1px -7px 0 -6px;
  padding-left: 8px;
  border-radius: 6px 6px 0 0;
  background: linear-gradient(100deg, #7488c0 0, #8c9ac8 60px, #5068a8 210px, #2c4a94 340px, #22428c 540px, #385fa8 640px, #3c64ae 800px, #4a74bc 1150px, #5078c0 1280px, #86a6dc 1400px);
}
.rdp-icon { width: 18px; height: 20px; margin-top: 7px; }
h1 {
  margin: 6px 0 0 5px;
  font-size: 14px;
  line-height: 22px;
  color: #0a1020;
  border-radius: 8px;
  background: rgba(190, 200, 226, .5);
  box-shadow: 0 0 8px 5px rgba(190, 200, 226, .5);
}
.rdp-controls {
  display: flex;
  margin: 0 6px 0 auto;
  border: 1px solid #1c2c50;
  border-top: 0;
  border-radius: 0 0 5px 5px;
  overflow: hidden;
  box-shadow: 0 0 0 1px #b4c8e8;
}
.rdp-controls button {
  display: grid;
  place-items: center;
  width: 34px;
  height: 22px;
  border-right: 1px solid #2c406c;
  box-shadow: inset 0 0 0 1px rgba(255, 255, 255, .5);
  background: linear-gradient(#b0bfdc, #90a4cc 48%, #5070a8 50%, #86a4d4);
}
.rdp-controls .rdp-close { width: 59px; border: 0; background: linear-gradient(#e4a098, #d47468 48%, #b42c18 50%, #d06850); }
.rdp-controls svg { width: 18px; height: 14px; }
.remote {
  flex: 1;
  display: flex;
  flex-direction: column;
  background: #000;
  box-shadow: 0 0 0 1px #a4bce0;
}
.remote-area { position: relative; flex: 1; overflow: hidden; }

.rshort {
  position: absolute;
  width: 74px;
  display: flex;
  flex-direction: column;
  align-items: center;
  gap: 3px;
  text-align: center;
  color: #fff;
}
.rshort svg { width: 32px; height: 32px; }
.r-bin { left: 0; top: 7px; }
.r-xr { left: 74px; top: 7px; }
.r-team { left: 0; top: 93px; }
.r-scan { left: 75px; top: 94px; font-size: 12px; }
.r-scan b { width: 30px; background: #c4c4c4; color: #111; font-weight: 400; }
.r-disk { left: 6px; top: 816px; width: 60px; }
.tick { position: absolute; left: 3px; top: 219px; width: 1px; height: 5px; background: #fff; }

/* Explorer windows */
.explorer {
  position: absolute;
  width: 812px;
  height: 705px;
  display: flex;
  flex-direction: column;
  padding: 0 7px 7px;
  border: 1px solid #4c5358;
  border-radius: 7px 7px 0 0;
  box-shadow: inset 0 0 0 1px #eef3f8;
  background: linear-gradient(#c0ccdb, #d9e4f1 70px);
}
.ex-left { left: 5px; top: 111px; }
.ex-right { left: 600px; top: 144px; }
.caption { display: flex; justify-content: flex-end; gap: 2px; }
.explorer > .caption { padding: 8px 1px 3px; }
.caption button {
  display: grid;
  place-items: center;
  width: 31px;
  height: 17px;
  border: 1px solid #8c9cb0;
  border-radius: 2px;
  background: linear-gradient(rgba(255, 255, 255, .3), rgba(255, 255, 255, 0));
}
.caption svg { width: 12px; height: 12px; }
.addressrow { display: flex; align-items: center; height: 31px; margin-bottom: 2px; }
.navbtns { width: 56px; height: 28px; }
.hist { border: 5px solid transparent; border-top-color: #2c6ca4; border-bottom: 0; margin: 0 3px 0 2px; }
.address {
  flex: 1;
  display: flex;
  align-items: center;
  height: 23px;
  padding-left: 3px;
  border: 1px solid #6c7480;
  background: #f8f8f9;
  color: #3a4450;
}
.fold { width: 14px; height: 16px; }
.address > i { width: 24px; padding-left: 8px; }
.address > i::before { content: ""; display: block; width: 0; border: 4px solid transparent; border-left: 5px solid #000; border-right: 0; }
.address b { margin: 0 7px 0 auto; border: 4px solid transparent; border-top: 5px solid #000040; border-bottom: 0; }
.refresh { align-self: stretch; width: 26px; display: grid; place-items: center; border-left: 1px solid #6c7480; }
.refresh svg { width: 16px; height: 16px; }
.search {
  display: flex;
  align-items: center;
  width: 103px;
  height: 23px;
  margin-left: 5px;
  padding: 0 5px 0 8px;
  border: 1px solid #8c98a6;
  border-radius: 2px;
  background: #fafbfc;
}
.search input { flex: 1; width: 0; border: 0; padding: 0; background: none; font: inherit; }
.search input::placeholder { font-style: italic; color: #5c6470; }
.search svg { width: 13px; height: 13px; }
.frame { flex: 1; display: flex; flex-direction: column; min-height: 0; background: #fcfcfc; }
.toolbar {
  display: flex;
  align-items: center;
  gap: 31px;
  height: 32px;
  padding: 0 15px 0 17px;
  border-top: 1px solid #a4b4c4;
  border-bottom: 1px solid #a0aebc;
  background: linear-gradient(#fff, #ecf2f9 48%, #dde7f3 50%, #dbe7f5);
  color: #1e395b;
}
.toolbar button { display: flex; align-items: center; }
.toolbar i { margin-left: 6px; border: 4px solid transparent; border-top: 5px solid #1e395b; border-bottom: 0; }
.toolbar svg { width: 16px; height: 16px; margin-right: 4px; }
.tools { display: flex; align-items: center; gap: 20px; margin-left: auto; }
.toolbar .tools svg { margin: 0; }
.toolbar .tools i { margin-left: 9px; }
.toolbar .help {
  justify-content: center;
  width: 16px;
  height: 16px;
  border: 1px solid #8c94a4;
  border-radius: 50%;
  background: #2448a8;
  color: #fff;
  font-weight: 700;
}
.panes { flex: 1; display: flex; min-height: 0; overflow: hidden; }
.tree { flex: none; width: 160px; padding: 10px 2px 0 1px; border-right: 1px solid #d6e2f0; overflow: hidden; }
.tree.scrolled { width: 142px; padding-right: 0; border: 0; }
.tree li { height: 21px; padding-left: 18px; border: 1px solid transparent; border-radius: 3px; white-space: nowrap; }
.tree a { display: flex; align-items: center; gap: 5px; height: 19px; }
.tree svg { width: 16px; height: 16px; }
.tree .gap { margin-top: 21px; }
.tree .l1 { padding-left: 28px; }
.tree .l2 { padding-left: 38px; }
.tree .l3 { padding-left: 48px; }
.tree .on { border-color: #d6d6d6; background: linear-gradient(#fafafa, #e6e6e6); }
.scrollbar {
  display: flex;
  flex-direction: column;
  align-items: center;
  width: 18px;
  border-right: 3px double #d6e2f0;
  background: #f2f2f2;
}
.scrollbar span { width: 15px; height: 432px; border: 1px solid #909498; background: linear-gradient(90deg, #f4f4f4, #d8d8da 50%, #bcbcc0); }
.scrollbar .up { margin: 7px 0; border: 4px solid transparent; border-bottom-color: #444; border-top: 0; }
.scrollbar .down { margin: auto 0 7px; border: 4px solid transparent; border-top-color: #444; border-bottom: 0; }
.files { flex: 1; min-width: 0; overflow: hidden; padding-left: 15px; }
table { width: 100%; table-layout: fixed; border-collapse: separate; border-spacing: 0; }
.c-name { width: 258px; }
.c-date, .c-type { width: 120px; }
.c-size { width: 80px; }
th { height: 32px; padding: 0 0 5px 6px; text-align: left; font-weight: 400; color: #4c607a; background: linear-gradient(#e4ecf5, #e9eff7) right 0 top 0 / 1px 24px no-repeat; }
th:first-child { padding-left: 3px; }
th:last-child { background: none; }
th.sorted { background: conic-gradient(from 135deg at 4px 0, #6ca0c0 90deg, transparent 0) 50% 2px / 8px 4px no-repeat, linear-gradient(#e4ecf5, #e9eff7) right 0 top 0 / 1px 24px no-repeat; }
td { height: 21px; padding: 0 0 0 6px; border: 1px solid transparent; border-width: 1px 0; white-space: nowrap; color: #6c6c6c; }
td:first-child { display: flex; align-items: center; gap: 6px; padding-left: 3px; border-left-width: 1px; border-radius: 3px 0 0 3px; color: #000; }
td svg { width: 14px; height: 16px; }
.sel td { border-color: #d4d4d4; background: linear-gradient(#f9f9f9, #e6e6e6); }
.details {
  display: flex;
  gap: 22px;
  height: 60px;
  padding: 3px 18px 0;
  border-top: 2px solid #d3dee9;
  background: #f0f4f9;
  color: #1e395b;
}
.details svg { width: 44px; height: 54px; }
.details p { padding-top: 3px; line-height: 16px; white-space: pre; }
.details strong { font-weight: 400; font-size: 12px; }
.details span { color: #5a6a80; }

/* Copy dialog */
.dialog {
  position: absolute;
  left: 524px;
  top: 342px;
  width: 415px;
  display: flex;
  flex-direction: column;
  padding: 0 7px 7px;
  border: 1px solid #000;
  border-radius: 7px 7px 0 0;
  box-shadow: inset -1px -1px 0 #38d4ec, inset 1px 1px 0 #e4eef8;
  background: linear-gradient(#9cb2ce, #b8cce6 32px, #c0d2ea 95px, #e0eaf6 119px, #b8cde8 120px);
}
.dlg-title { display: flex; align-items: center; height: 29px; padding: 6px 2px 0 3px; }
.dlg-title .caption { margin-left: auto; }
.dlg-icon { width: 16px; height: 16px; margin-right: 3px; }
h2 { font-size: 11px; }
.dlg-title .caption button { border-color: #586c88; background: linear-gradient(#c4d4e8, #b4c8e0 48%, #94accc 50%, #b0c8e4); }
.dlg-title .caption button:disabled { opacity: .8; border-color: #7c90ac; }
.dlg-title .caption .red { border-color: #5c1810; background: linear-gradient(#e4a498, #d88070 48%, #bc3c24 50%, #d07860); }
.banner { height: 40px; padding-left: 22px; font-size: 15px; line-height: 40px; color: #14202c; background: linear-gradient(90deg, #dce7f4, #a4c3e8 50%, #9abce2 53%, #5080b0 72%, #00284e 100%); }
.dlg-body { height: 80px; padding: 11px 22px 0; background: #fff; white-space: nowrap; }
progress { display: block; width: 100%; height: 15px; margin-top: 9px; appearance: none; border: 1px solid #909090; border-radius: 2px; overflow: hidden; }
progress::-webkit-progress-bar { background: linear-gradient(#f0f0f0, #dedede 48%, #c6c6c6 50%, #d4d4d4); }
progress::-webkit-progress-value { background: linear-gradient(#b4f0b8, #80e488 45%, #08c41c 50%, #1cdc30); }
.dialog footer { display: flex; align-items: center; justify-content: space-between; height: 43px; padding: 0 22px; border-top: 1px solid #dedede; background: #f0f0f0; }
.more { display: flex; align-items: center; gap: 3px; }
.more i { display: grid; place-items: center; width: 19px; height: 19px; border: 1px solid #808488; border-radius: 50%; background: linear-gradient(#fff, #d8dadc); }
.more svg { width: 10px; height: 8px; }
.cancel { width: 73px; height: 23px; border: 1px solid #2c6c94; border-radius: 3px; box-shadow: inset 0 0 0 1px #4cc8ec; background: linear-gradient(#f4f6f8, #ebeff2 48%, #d8dde1 50%, #d0d4d8); }
.cursor { position: absolute; left: 917px; top: 495px; width: 13px; height: 20px; }

/* Remote taskbar */
.rbar {
  display: flex;
  align-items: center;
  height: 40px;
  border-top: 1px solid #d4e0ec;
  background: linear-gradient(90deg, #8494a8 0, #7c8ca0 45px, #a9bfda 90px);
}
.rbar svg { width: 32px; height: 32px; }
.rstart { width: 57px; padding-left: 8px; }
.rbar .rstart svg { width: 38px; height: 38px; }
.pin { width: 62px; display: grid; place-items: center; }
.pin + .pin { margin-right: 2px; }
.task { display: grid; place-items: center; width: 60px; height: 38px; margin-right: 2px; border: 1px solid #4c6078; border-radius: 3px; box-shadow: inset 0 0 0 1px #dce8f4; background: linear-gradient(160deg, #d4e0ee, #a4b8d0); }
.busy { width: 52px; background: linear-gradient(90deg, #84d488, #d8ecdc 30%, #e4ecf4 60%, #f8fafc); box-shadow: inset 0 0 0 1px #fff, 3px 0 0 #c4d4e8, 4px 0 0 #5c7088, 6px 0 0 #b8cce4, 7px 0 0 #7488a0; }
.rtray {
  flex: 1;
  align-self: stretch;
  display: flex;
  align-items: center;
  justify-content: flex-end;
  gap: 7px;
  padding-right: 5px;
  color: #fff;
  background: linear-gradient(270deg, #8698ac, #8294a8 155px, rgba(130, 148, 168, 0) 200px);
}
.rtray svg { width: 18px; height: 16px; }
.rtray .uparrow { margin-right: 3px; }
.rtray time { width: 68px; margin-left: 6px; text-align: center; line-height: 17px; }
.uparrow { border: 5px solid transparent; border-bottom-color: #fff; border-top: 0; }
.rpeek { width: 15px; height: 38px; border: 1px solid #b8c4d0; background: linear-gradient(#a0acb8, #586878 35%, #687888); }

/* Local taskbar */
.taskbar {
  position: relative;
  display: flex;
  align-items: center;
  height: 48px;
  border-top: 1px solid #0a1c48;
  box-shadow: inset 0 1px 0 #7890c0;
  background: linear-gradient(100deg, #1c346c 0, #20386f 60px, #24428a 100px, #22408a 60%, #2c54a0 70%, #2850a0 84%, #1e3c78 86%, #2a4a84 94%, #1c3a74 97%);
}
.start { width: 70px; padding-left: 11px; }
.start svg { width: 44px; height: 44px; }
.tpin { width: 70px; display: grid; place-items: center; }
.tpin svg { width: 40px; height: 40px; }
.ttask { display: grid; place-items: center; width: 62px; height: 46px; margin-left: 1px; border: 1px solid #14244c; border-radius: 3px; box-shadow: inset 0 0 0 1px #e0e8f8, 3px 0 0 #8498c8, 4px 0 0 #243c78; background: linear-gradient(#c0c8e0, #8494c4 60%, #a4b4dc); }
.ttask svg { width: 38px; height: 42px; }
.tray { display: flex; align-items: center; gap: 10px; margin-left: auto; margin-right: 12px; color: #fff; }
.tray svg { width: 20px; height: 20px; }
.tray .uparrow { margin-right: 8px; }
.tray time { width: 80px; margin-left: 9px; text-align: center; font-size: 14px; line-height: 22px; }
.peek { width: 14px; height: 46px; border: 1px solid #8ca0c8; background: linear-gradient(#5470a4, #1c3468 40%, #3458a4); }
```
